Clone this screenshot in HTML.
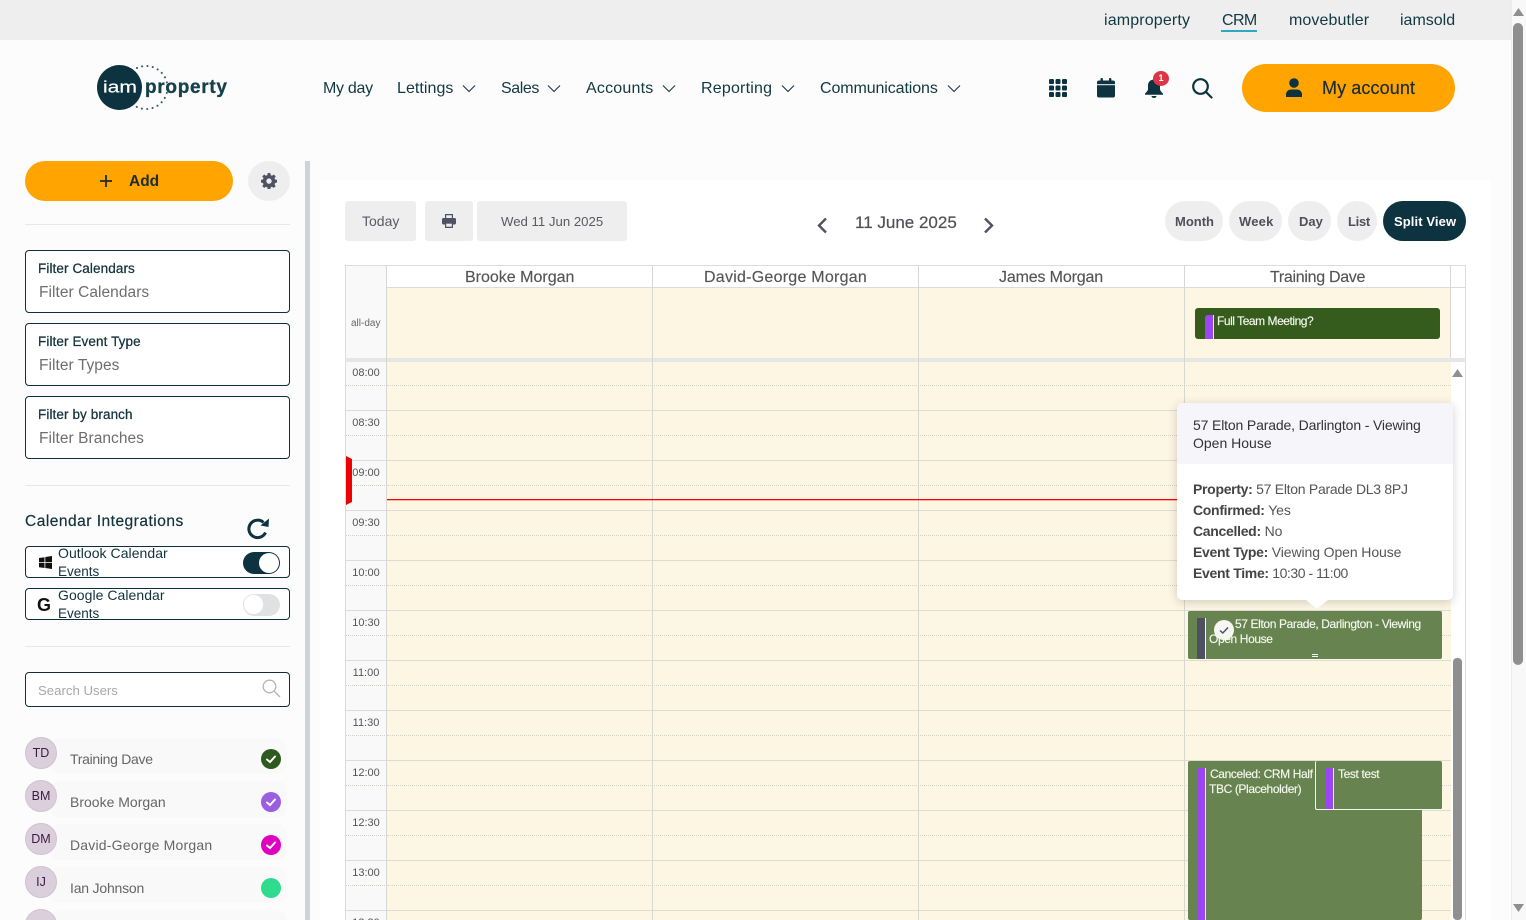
<!DOCTYPE html>
<html lang="en"><head><meta charset="utf-8"><title>Calendar</title>
<style>
html,body{margin:0;padding:0;width:1526px;height:920px;overflow:hidden;background:#fcfcfc;font-family:"Liberation Sans",sans-serif}
#p{position:relative;width:1526px;height:920px;overflow:hidden}
#p div,#p span.t,#p svg{position:absolute}
.t{position:absolute;white-space:nowrap;line-height:1}
.nav{font-size:16px;color:#123842;top:81px}
.top{font-size:16px;color:#123842;top:13px}
.box{left:25px;width:263px;height:61px;border:1px solid #0f2f3a;border-radius:4px;background:#fff}
.lb{left:38px;font-size:13.5px;letter-spacing:.1px;-webkit-text-stroke:.25px #12323c;color:#12323c}
.ph{left:39px;font-size:15.5px;letter-spacing:.05px;color:#6e6e6e}
.btn{background:#eeeeee;border-radius:3px;top:201px;height:40px}
.pill{background:#eeeeee;border-radius:20px;top:201px;height:40px}
.pt{font-size:13px;font-weight:700;color:#50505c;top:215px}
.col{font-size:16px;color:#555;top:270px;-webkit-text-stroke:.15px #555}
.time{font-size:11px;color:#555;left:346px;width:40px;text-align:center}
.hl{left:387px;width:1064px;height:1px;background:#dcdcd4}
.dl{left:387px;width:1064px;height:0;border-top:1px dotted #d2d2ca}
.vl{width:1px;background:#d8d8d2}
.ev{background:#67834f;border-radius:2px}
.w{color:#f4f8ee;font-size:12px;letter-spacing:-.38px;-webkit-text-stroke:.15px #f4f8ee}
.tip{font-size:14px;color:#555;left:1193px}
.tip b{color:#444;font-weight:700;letter-spacing:-.3px}
.u{left:70px;font-size:14px;color:#666}
.ini{left:25px;width:32px;height:32px;border-radius:50%;background:#dccfdc;border:1px solid #cfc3cf;box-sizing:border-box;text-align:center;font-size:12.5px;line-height:30px;color:#3b1b45}
.ur{left:50px;width:237px;height:36px;border-radius:10px;background:#f9f9f9}
.dot{left:261px;width:20px;height:20px;border-radius:50%}
.hr{left:25px;width:265px;height:1px;background:#e8e8e8}
</style></head><body><div id="p">

<div style="left:0;top:0;width:1511px;height:40px;background:#eeeeee"></div>
<span class="t top" style="left:1104px;letter-spacing:.15px">iamproperty</span>
<span class="t top" style="left:1222px;letter-spacing:-.6px">CRM</span>
<div style="left:1221px;top:30px;width:36px;height:2px;background:#2ea8c4"></div>
<span class="t top" style="left:1289px;letter-spacing:.1px">movebutler</span>
<span class="t top" style="left:1400px">iamsold</span>

<!-- logo -->
<svg style="left:90px;top:58px" width="145" height="60" viewBox="0 0 145 60">
<circle cx="56" cy="29.500" r="21.500" fill="none" stroke="#3f5c67" stroke-width="2" stroke-linecap="round" stroke-dasharray="0.100 5.300"/>
<circle cx="29.500" cy="29.500" r="22.500" fill="#0d3340"/>
<text x="13" y="34.500" font-family="Liberation Sans" font-size="17" fill="#fff" stroke="#fff" stroke-width=".2" textLength="34" lengthAdjust="spacingAndGlyphs">iam</text>
<text x="55" y="35" font-family="Liberation Sans" font-size="19" font-weight="700" fill="#16404c" stroke="#16404c" stroke-width=".3" textLength="82">property</text>
</svg>

<span class="t nav" style="left:323px;letter-spacing:-.3px">My day</span>
<span class="t nav" style="left:397px;letter-spacing:.05px">Lettings</span>
<span class="t nav" style="left:501px;letter-spacing:-.4px">Sales</span>
<span class="t nav" style="left:586px;letter-spacing:.2px">Accounts</span>
<span class="t nav" style="left:701px;letter-spacing:.2px">Reporting</span>
<span class="t nav" style="left:820px;letter-spacing:-.1px">Communications</span>
<svg style="left:462px;top:84px" width="14" height="9" fill="none" stroke="#123842" stroke-width="1.100"><path d="M1 1.500l6 6 6-6"/></svg>
<svg style="left:547px;top:84px" width="14" height="9" fill="none" stroke="#123842" stroke-width="1.100"><path d="M1 1.500l6 6 6-6"/></svg>
<svg style="left:662px;top:84px" width="14" height="9" fill="none" stroke="#123842" stroke-width="1.100"><path d="M1 1.500l6 6 6-6"/></svg>
<svg style="left:781px;top:84px" width="14" height="9" fill="none" stroke="#123842" stroke-width="1.100"><path d="M1 1.500l6 6 6-6"/></svg>
<svg style="left:947px;top:84px" width="14" height="9" fill="none" stroke="#123842" stroke-width="1.100"><path d="M1 1.500l6 6 6-6"/></svg>

<svg style="left:1049px;top:79px" width="18" height="18" fill="#0d3340"><rect x="0" y="0" width="5" height="5" rx="1.300"/><rect x="6.500" y="0" width="5" height="5" rx="1.300"/><rect x="13" y="0" width="5" height="5" rx="1.300"/><rect x="0" y="6.500" width="5" height="5" rx="1.300"/><rect x="6.500" y="6.500" width="5" height="5" rx="1.300"/><rect x="13" y="6.500" width="5" height="5" rx="1.300"/><rect x="0" y="13" width="5" height="5" rx="1.300"/><rect x="6.500" y="13" width="5" height="5" rx="1.300"/><rect x="13" y="13" width="5" height="5" rx="1.300"/></svg>
<svg style="left:1097px;top:78px" width="18" height="20" fill="#0d3340"><rect x="0" y="2.500" width="18" height="17" rx="2"/><rect x="3.500" y="0" width="2.400" height="4" rx="1"/><rect x="12" y="0" width="2.400" height="4" rx="1"/><rect x="0" y="6.200" width="18" height="1" fill="#fcfcfc"/></svg>
<svg style="left:1144px;top:78px" width="20" height="20" fill="#0d3340"><path d="M10 1.500c-3.600 0-6 2.600-6 6v3.500c0 1.600-1.300 3-3 4.600v1.200h18v-1.200c-1.700-1.600-3-3-3-4.600V7.500c0-3.400-2.400-6-6-6z"/><path d="M7.500 18h5c0 1.200-1.100 2-2.500 2s-2.500-.8-2.500-2z"/></svg>
<div style="left:1153px;top:71px;width:16px;height:15px;border-radius:50%;background:#dc3545;color:#fff;font-size:9px;font-weight:700;text-align:center;line-height:15px">1</div>
<svg style="left:1191px;top:77px" width="22" height="22" fill="none" stroke="#0d3340" stroke-width="2.200"><circle cx="9.500" cy="9.500" r="7.300"/><path d="M15 15l5.500 5.500" stroke-linecap="round"/></svg>

<div style="left:1242px;top:64px;width:213px;height:48px;border-radius:24px;background:#ffa400"></div>
<svg style="left:1284px;top:78px" width="20" height="20" fill="#0d3340"><circle cx="10" cy="5" r="4.800"/><path d="M2 19v-2.500C2 13.500 4.500 11.500 7 11.500h6c2.500 0 5 2 5 5V19z"/></svg>
<span class="t" style="left:1322px;top:79px;font-size:18px;color:#1b2d2f;letter-spacing:.1px;-webkit-text-stroke:.2px #1b2d2f">My account</span>

<!-- sidebar -->
<div style="left:305px;top:161px;width:5px;height:759px;background:#cfd2d6"></div>
<div style="left:25px;top:161px;width:208px;height:40px;border-radius:20px;background:#ffa400"></div>
<svg style="left:99px;top:174px" width="14" height="14" stroke="#1b2d2f" stroke-width="1.800"><path d="M7 1v12M1 7h12"/></svg>
<span class="t" style="left:129px;top:174px;font-size:15.500px;font-weight:700;color:#1b2d2f">Add</span>
<div style="left:248px;top:161px;width:42px;height:40px;border-radius:50%;background:#eeeeee"></div>
<svg style="left:261px;top:173px" width="16" height="16" viewBox="0 0 16 16"><path fill="#4f5263" fill-rule="evenodd" d="M6.700 0h2.600l.4 2.100 1.300.6 1.800-1.200 1.900 1.900-1.200 1.800.6 1.300 1.900.4v2.600l-1.900.5-.6 1.300 1.200 1.800-1.900 1.800-1.800-1.200-1.300.6-.4 2.100H6.700l-.4-2.100-1.300-.6-1.800 1.200-1.900-1.800 1.200-1.800-.6-1.300L0 9.500V6.900l1.900-.4.6-1.300L1.300 3.400l1.900-1.900L5 2.700l1.300-.6zM8 5.400a2.700 2.700 0 100 5.400 2.700 2.700 0 000-5.400z"/></svg>
<div class="hr" style="top:224px"></div>

<div class="box" style="top:250px"></div>
<span class="t lb" style="top:262px">Filter Calendars</span><span class="t ph" style="top:285px">Filter Calendars</span>
<div class="box" style="top:323px"></div>
<span class="t lb" style="top:335px">Filter Event Type</span><span class="t ph" style="top:358px">Filter Types</span>
<div class="box" style="top:396px"></div>
<span class="t lb" style="top:408px">Filter by branch</span><span class="t ph" style="top:431px">Filter Branches</span>
<div class="hr" style="top:485px"></div>

<span class="t" style="left:25px;top:514px;font-size:15.500px;color:#12323c;letter-spacing:.5px;-webkit-text-stroke:.2px #12323c">Calendar Integrations</span>
<svg style="left:246px;top:516px" width="24" height="24" fill="none"><path d="M19.500 16.500a8.700 8.700 0 11-2-10" stroke="#0d3340" stroke-width="3"/><path d="M23 2.500l-.5 8.500-8-1.500z" fill="#0d3340"/></svg>

<div style="left:25px;top:546px;width:263px;height:30px;border:1px solid #0f2f3a;border-radius:4px;background:#fff"></div>
<svg style="left:39px;top:556px" width="13" height="13" fill="#111"><path d="M0 2l5.500-.8v5H0zM6.300 1L13 0v6.200H6.300zM0 7h5.500v5L0 11.200zM6.300 7H13v6l-6.700-1z"/></svg>
<span class="t" style="left:58px;top:546px;font-size:14px;letter-spacing:.05px;color:#12323c">Outlook Calendar</span>
<span class="t" style="left:58px;top:565px;font-size:13.500px;color:#12323c">Events</span>
<div style="left:243px;top:552px;width:37px;height:22px;border-radius:11px;background:#0d3340"></div>
<div style="left:259px;top:553px;width:20px;height:20px;border-radius:50%;background:#fff"></div>

<div style="left:25px;top:588px;width:263px;height:30px;border:1px solid #0f2f3a;border-radius:4px;background:#fff"></div>
<span class="t" style="left:37px;top:596px;font-size:18px;font-weight:700;color:#111">G</span>
<span class="t" style="left:58px;top:588px;font-size:14px;letter-spacing:.05px;color:#12323c">Google Calendar</span>
<span class="t" style="left:58px;top:607px;font-size:13.500px;color:#12323c">Events</span>
<div style="left:243px;top:594px;width:37px;height:22px;border-radius:11px;background:#dfe1e3"></div>
<div style="left:243px;top:594px;width:21px;height:21px;border-radius:50%;background:#fff;border:1px solid #e4e4e4;box-sizing:border-box"></div>
<div class="hr" style="top:646px"></div>

<div style="left:25px;top:672px;width:263px;height:33px;border:1px solid #0f2f3a;border-radius:4px;background:#fff"></div>
<span class="t" style="left:38px;top:684px;font-size:13.200px;color:#a8a8a8">Search Users</span>
<svg style="left:262px;top:679px" width="19" height="19" fill="none" stroke="#b5b5b5" stroke-width="1.300"><circle cx="7.500" cy="7.500" r="6.300"/><path d="M12 12l6 6"/></svg>

<div class="ur" style="top:738px"></div><div class="ini" style="top:737px">TD</div><span class="t u" style="top:752px;letter-spacing:-.3px">Training Dave</span>
<div class="dot" style="top:749px;background:#2f5a1f"></div>
<div class="ur" style="top:781px"></div><div class="ini" style="top:780px">BM</div><span class="t u" style="top:795px">Brooke Morgan</span>
<div class="dot" style="top:792px;background:#9a5fe0"></div>
<div class="ur" style="top:824px"></div><div class="ini" style="top:823px">DM</div><span class="t u" style="top:838px;letter-spacing:.2px">David-George Morgan</span>
<div class="dot" style="top:835px;background:#e000c0"></div>
<div class="ur" style="top:867px"></div><div class="ini" style="top:866px">IJ</div><span class="t u" style="top:881px;letter-spacing:-.2px">Ian Johnson</span>
<div class="dot" style="top:878px;background:#2fdc8e"></div>
<div class="ur" style="top:910px"></div><div class="ini" style="top:909px"></div>
<svg style="left:261px;top:749px" width="20" height="20" fill="none" stroke="#fff" stroke-width="2" stroke-linecap="round"><path d="M6 10.500l3 2.500 5-5.500"/></svg>
<svg style="left:261px;top:792px" width="20" height="20" fill="none" stroke="#fff" stroke-width="2" stroke-linecap="round"><path d="M6 10.500l3 2.500 5-5.500"/></svg>
<svg style="left:261px;top:835px" width="20" height="20" fill="none" stroke="#fff" stroke-width="2" stroke-linecap="round"><path d="M6 10.500l3 2.500 5-5.500"/></svg>

<!-- calendar card -->
<div style="left:320px;top:180px;width:1170px;height:740px;background:#fff"></div>
<div class="btn" style="left:345px;width:71px"></div>
<span class="t" style="left:362px;top:214px;font-size:14px;color:#5a5a62">Today</span>
<div class="btn" style="left:425px;width:48px"></div>
<svg style="left:442px;top:214px" width="14" height="14" fill="#4f5263"><path d="M3 0h8v4H9.800V1.300H4.200V4H3z"/><rect x="0" y="4" width="14" height="6.500" rx="1.500"/><rect x="3" y="8.500" width="8" height="5.500" rx=".5"/><rect x="4.200" y="9.700" width="5.600" height="3" fill="#eee"/></svg>
<div class="btn" style="left:477px;width:150px"></div>
<span class="t" style="left:501px;top:215px;font-size:13.200px;color:#5a5a62">Wed 11 Jun 2025</span>

<svg style="left:816px;top:217px" width="12" height="17" fill="none" stroke="#4f5263" stroke-width="2.400"><path d="M10 1.500L3 8.500l7 7"/></svg>
<span class="t" style="left:855px;top:214px;font-size:17px;color:#505058;-webkit-text-stroke:.2px #505058">11 June 2025</span>
<svg style="left:983px;top:217px" width="12" height="17" fill="none" stroke="#4f5263" stroke-width="2.400"><path d="M2 1.500l7 7-7 7"/></svg>

<div class="pill" style="left:1165px;width:58px"></div><span class="t pt" style="left:1175px">Month</span>
<div class="pill" style="left:1229px;width:53px"></div><span class="t pt" style="left:1239px;letter-spacing:.2px">Week</span>
<div class="pill" style="left:1288px;width:43px"></div><span class="t pt" style="left:1299px">Day</span>
<div class="pill" style="left:1337px;width:40px"></div><span class="t pt" style="left:1348px;letter-spacing:-.3px">List</span>
<div class="pill" style="left:1383px;width:83px;background:#0d3340"></div><span class="t pt" style="left:1394px;color:#fff;letter-spacing:.1px">Split View</span>

<!-- grid -->
<div style="left:345px;top:265px;width:1121px;height:655px;border-left:1px solid #dcdcdc;border-right:1px solid #dcdcdc;box-sizing:border-box"></div>
<div style="left:345px;top:265px;width:1121px;height:1px;background:#dcdcdc"></div>
<div style="left:345px;top:287px;width:1121px;height:1px;background:#dcdcdc"></div>
<div style="left:346px;top:266px;width:41px;height:654px;background:#f9f9fa"></div>
<div style="left:387px;top:288px;width:1064px;height:70px;background:#fdf6e3"></div>
<div style="left:387px;top:362px;width:1064px;height:558px;background:#fdf6e3"></div>
<div style="left:345px;top:358px;width:1121px;height:4px;background:#e6e6e6"></div>

<span class="t col" style="left:465px">Brooke Morgan</span>
<span class="t col" style="left:704px;letter-spacing:.25px">David-George Morgan</span>
<span class="t col" style="left:999px;letter-spacing:-.15px">James Morgan</span>
<span class="t col" style="left:1270px;letter-spacing:-.3px">Training Dave</span>
<span class="t" style="left:351px;top:319px;font-size:10px;color:#666">all-day</span>

<div class="hl" style="top:410px"></div><div class="hl" style="top:460px"></div><div class="hl" style="top:510px"></div><div class="hl" style="top:560px"></div><div class="hl" style="top:610px"></div><div class="hl" style="top:660px"></div><div class="hl" style="top:710px"></div><div class="hl" style="top:760px"></div><div class="hl" style="top:810px"></div><div class="hl" style="top:860px"></div><div class="hl" style="top:910px"></div>
<div class="dl" style="top:385px"></div><div class="dl" style="top:435px"></div><div class="dl" style="top:485px"></div><div class="dl" style="top:535px"></div><div class="dl" style="top:585px"></div><div class="dl" style="top:635px"></div><div class="dl" style="top:685px"></div><div class="dl" style="top:735px"></div><div class="dl" style="top:785px"></div><div class="dl" style="top:835px"></div><div class="dl" style="top:885px"></div>
<div style="left:346px;top:410px;width:41px;height:1px;background:#dcdcdc"></div><div style="left:346px;top:460px;width:41px;height:1px;background:#dcdcdc"></div><div style="left:346px;top:510px;width:41px;height:1px;background:#dcdcdc"></div><div style="left:346px;top:560px;width:41px;height:1px;background:#dcdcdc"></div><div style="left:346px;top:610px;width:41px;height:1px;background:#dcdcdc"></div><div style="left:346px;top:660px;width:41px;height:1px;background:#dcdcdc"></div><div style="left:346px;top:710px;width:41px;height:1px;background:#dcdcdc"></div><div style="left:346px;top:760px;width:41px;height:1px;background:#dcdcdc"></div><div style="left:346px;top:810px;width:41px;height:1px;background:#dcdcdc"></div><div style="left:346px;top:860px;width:41px;height:1px;background:#dcdcdc"></div><div style="left:346px;top:910px;width:41px;height:1px;background:#dcdcdc"></div>
<div class="dl" style="left:346px;width:41px;top:385px"></div><div class="dl" style="left:346px;width:41px;top:435px"></div><div class="dl" style="left:346px;width:41px;top:485px"></div><div class="dl" style="left:346px;width:41px;top:535px"></div><div class="dl" style="left:346px;width:41px;top:585px"></div><div class="dl" style="left:346px;width:41px;top:635px"></div><div class="dl" style="left:346px;width:41px;top:685px"></div><div class="dl" style="left:346px;width:41px;top:735px"></div><div class="dl" style="left:346px;width:41px;top:785px"></div><div class="dl" style="left:346px;width:41px;top:835px"></div><div class="dl" style="left:346px;width:41px;top:885px"></div>

<div class="vl" style="left:386px;top:265px;height:655px"></div>
<div class="vl" style="left:652px;top:265px;height:655px"></div>
<div class="vl" style="left:918px;top:265px;height:655px"></div>
<div class="vl" style="left:1184px;top:265px;height:655px"></div>
<div class="vl" style="left:1450px;top:265px;height:93px"></div>

<span class="t time" style="top:368px">08:00</span><span class="t time" style="top:418px">08:30</span><span class="t time" style="top:468px">09:00</span><span class="t time" style="top:518px">09:30</span><span class="t time" style="top:568px">10:00</span><span class="t time" style="top:618px">10:30</span><span class="t time" style="top:668px">11:00</span><span class="t time" style="top:718px">11:30</span><span class="t time" style="top:768px">12:00</span><span class="t time" style="top:818px">12:30</span><span class="t time" style="top:868px">13:00</span><span class="t time" style="top:918px">13:30</span>

<!-- now -->
<div style="left:387px;top:499px;width:800px;height:1px;background:#ff0000;box-shadow:0 1px 0 rgba(255,0,0,.3)"></div>
<svg style="left:346px;top:456px" width="6" height="49"><path d="M0 0l6 3v43l-6 3z" fill="#f00000"/></svg>

<!-- scrollbar in grid -->
<svg style="left:1452px;top:369px" width="11" height="8"><path d="M5.500 0L11 8H0z" fill="#8f8f8f"/></svg>
<div style="left:1453px;top:658px;width:9px;height:262px;border-radius:4px;background:#8f8f8f"></div>

<!-- all day event -->
<div style="left:1195px;top:308px;width:245px;height:31px;border-radius:3px;background:#355c1d"></div>
<div style="left:1205px;top:315px;width:9px;height:24px;background:#9b45f5;border-right:1px solid #f4f4f4;box-sizing:border-box;border-radius:3px 0 0 0"></div>
<span class="t w" style="left:1217px;top:315px;letter-spacing:-.46px">Full Team Meeting?</span>

<!-- events -->
<div class="ev" style="left:1188px;top:611px;width:254px;height:48px"></div>
<div style="left:1197px;top:618px;width:9px;height:41px;background:#4d5060;border-right:1px solid #f4f4f4;box-sizing:border-box"></div>
<span class="t w" style="left:1235px;top:618px">57 Elton Parade, Darlington - Viewing</span>
<span class="t w" style="left:1209px;top:633px">Open House</span>
<div style="left:1214px;top:620px;width:20px;height:20px;border-radius:50%;background:#f6f6f2"></div>
<svg style="left:1214px;top:620px" width="20" height="20" fill="none" stroke="#4d5060" stroke-width="1.500"><path d="M6 10.500l2.800 2.500 5.200-5.500"/></svg>
<div style="left:1312px;top:654px;width:6px;height:1px;background:#f4f8ee"></div><div style="left:1312px;top:656px;width:6px;height:1px;background:#f4f8ee"></div>

<div class="ev" style="left:1188px;top:761px;width:234px;height:159px"></div>
<div style="left:1197px;top:768px;width:9px;height:152px;background:#9b45f5;border-right:1px solid #f4f4f4;box-sizing:border-box"></div>
<span class="t w" style="left:1210px;top:768px">Canceled: CRM Half</span>
<span class="t w" style="left:1209px;top:783px">TBC (Placeholder)</span>
<div class="ev" style="left:1315px;top:761px;width:127px;height:49px;border-left:1px solid #f4f8ee;border-bottom:1px solid #f4f8ee;box-sizing:border-box"></div>
<div style="left:1325px;top:768px;width:9px;height:41px;background:#9b45f5;border-right:1px solid #f4f4f4;box-sizing:border-box"></div>
<span class="t w" style="left:1338px;top:768px">Test test</span>

<!-- popover -->
<div style="left:1177px;top:403px;width:276px;height:197px;background:#fff;border-radius:5px;box-shadow:0 2px 10px rgba(0,0,0,.18)"></div>
<div style="left:1177px;top:403px;width:276px;height:61px;background:#f6f6fa;border-radius:5px 5px 0 0"></div>
<svg style="left:1306px;top:600px" width="22" height="10"><path d="M0 0h22L11 9z" fill="#fff"/></svg>
<span class="t tip" style="top:418px;color:#333;letter-spacing:-.15px">57 Elton Parade, Darlington - Viewing</span>
<span class="t tip" style="top:436px;color:#333">Open House</span>
<span class="t tip" style="top:482px;letter-spacing:-.28px"><b>Property:</b> 57 Elton Parade DL3 8PJ</span>
<span class="t tip" style="top:503px;letter-spacing:-.1px"><b>Confirmed:</b> Yes</span>
<span class="t tip" style="top:524px;letter-spacing:-.1px"><b>Cancelled:</b> No</span>
<span class="t tip" style="top:545px;letter-spacing:-.1px"><b>Event Type:</b> Viewing Open House</span>
<span class="t tip" style="top:566px;letter-spacing:-.45px"><b>Event Time:</b> 10:30 - 11:00</span>

<!-- page scrollbar -->
<div style="left:1511px;top:0;width:15px;height:920px;background:#f8f8f8;border-left:1px solid #ececec;box-sizing:border-box"></div>
<svg style="left:1513px;top:8px" width="11" height="8"><path d="M5.500 0L11 8H0z" fill="#8f8f8f"/></svg>
<svg style="left:1513px;top:904px" width="11" height="8"><path d="M5.500 8L11 0H0z" fill="#8f8f8f"/></svg>
<div style="left:1513px;top:23px;width:10px;height:642px;border-radius:5px;background:#8f8f8f"></div>
</div></body></html>
